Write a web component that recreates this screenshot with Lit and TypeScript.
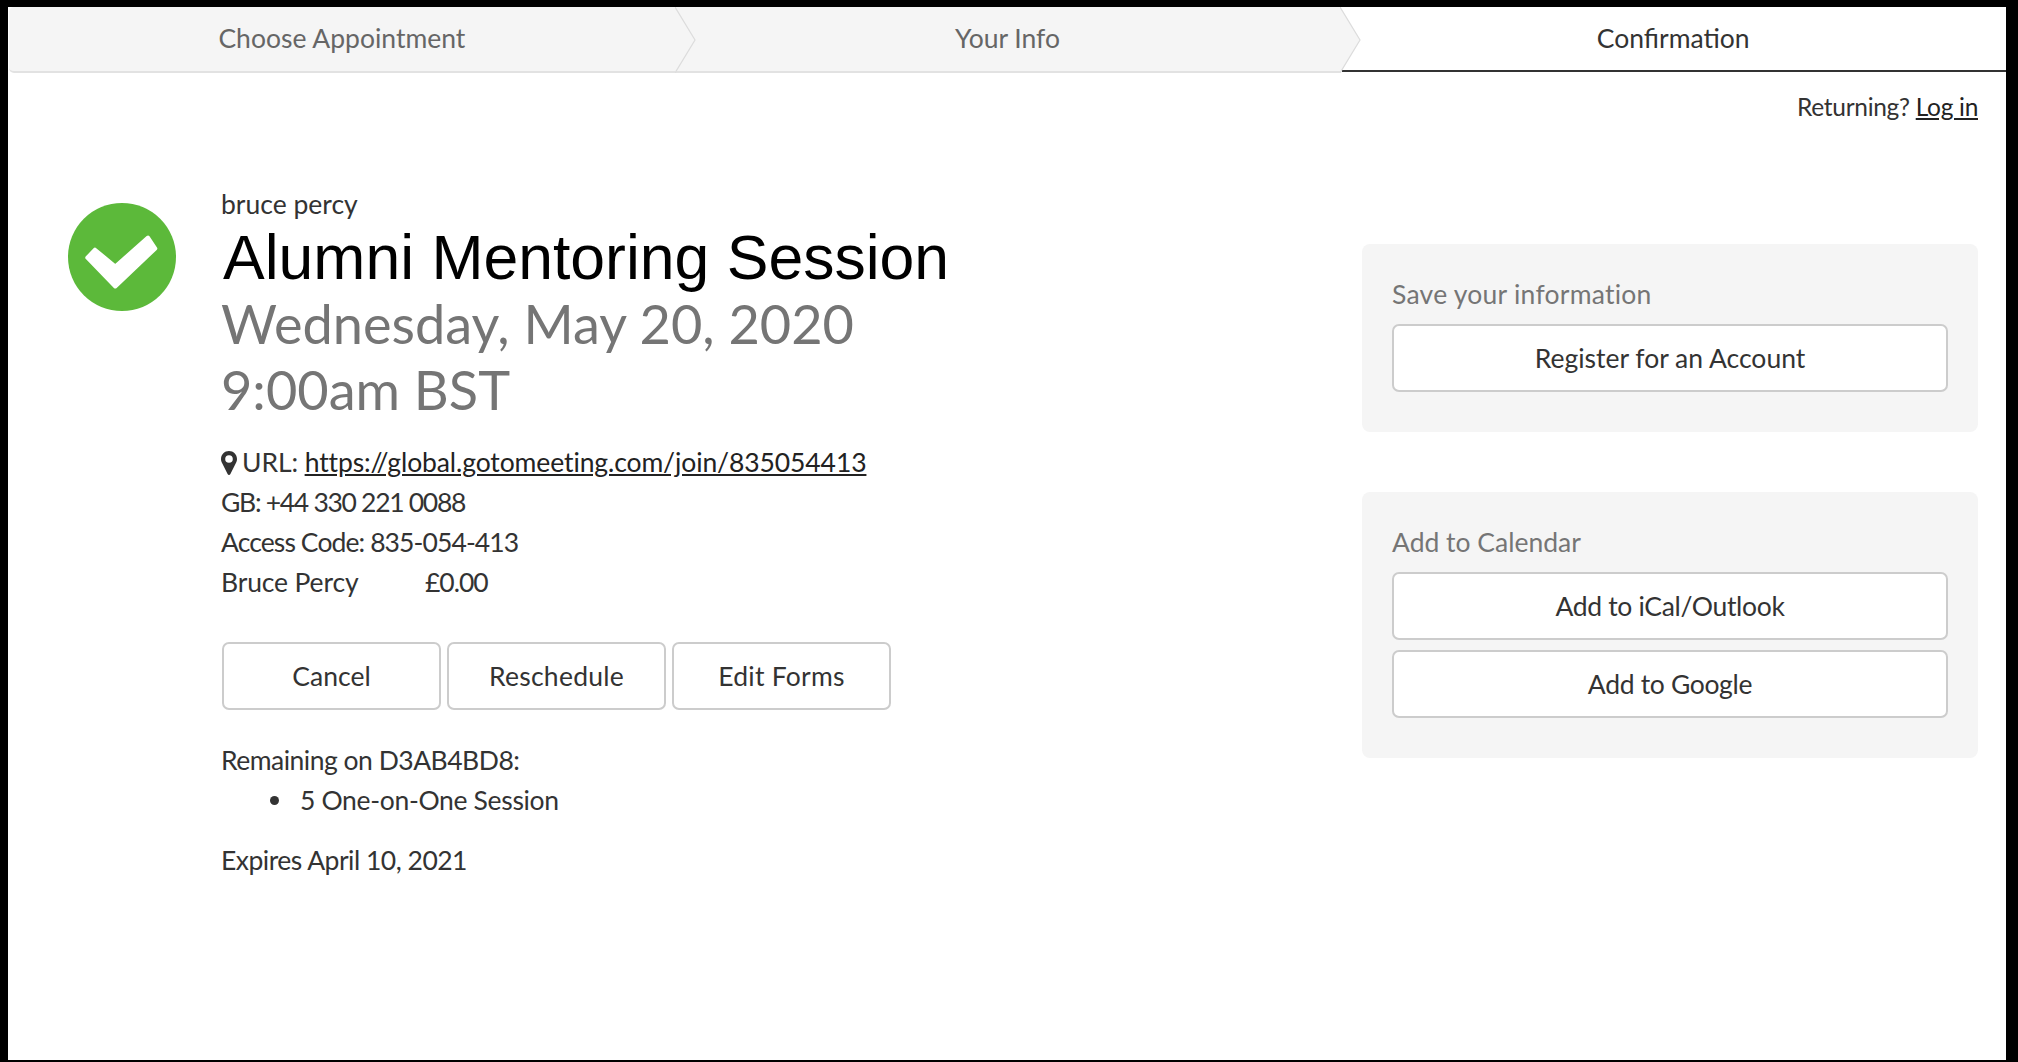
import { LitElement, html, css } from "lit";
import { customElement } from "lit/decorators.js";

@customElement("app-root")
export class AppRoot extends LitElement {
  static styles = css`
    :host { display: block; height: 1062px; box-sizing: border-box; background: #000; padding: 7px 12px 2px 8px; font-family: "Lato", "Noto Sans", sans-serif; font-size: 26.5px; line-height: 40px; color: #333; }
    * { box-sizing: border-box; }
    .page { background: #fff; height: 100%; overflow: hidden; }
    .tabs { display: flex; height: 66px; margin-left: 1px; }
    .tab { flex: 1; position: relative; display: flex; align-items: center; justify-content: center; padding-bottom: 2px; background: #f5f5f5; border-bottom: 2px solid #e2e2e2; color: #666; }
    .tab:first-child { border-top-left-radius: 5px; border-bottom-left-radius: 5px; }
    .tab.active { background: #fff; color: #333; border-bottom: 0; padding-bottom: 4px; }
    .tab.active::after { content: ""; position: absolute; left: 2px; right: 0; bottom: 1px; height: 2px; background: #333; }
    .chev { position: absolute; top: 0; left: 100%; width: 21px; height: 66px; z-index: 1; display: block; }
    .login { display: flex; justify-content: flex-end; gap: 6px; padding: 14px 28px 1px 0; font-size: 24.5px; letter-spacing: -0.3px; }
    a { color: #222; text-decoration: underline; }
    .body { display: flex; justify-content: space-between; padding: 0 28px 0 60px; }
    .main { display: flex; }
    .status { width: 108px; height: 108px; margin: 75px 45px 0 0; display: block; }
    .details { padding-top: 56px; width: 900px; }
    .title { font-family: "Liberation Sans", Arial, sans-serif; font-weight: 400; font-size: 62.5px; line-height: 66px; margin: 0 0 1px 2px; color: #000; }
    .when { font-size: 54.1px; line-height: 66px; margin: 0; color: #757575; font-weight: 400; }
    .info { margin-top: 19px; }
    .info div { height: 40px; }
    .pin { width: 16px; height: 24px; vertical-align: -3px; margin-right: 5px; }
    .name { display: inline-block; width: 204px; letter-spacing: -0.15px; }
    .url { letter-spacing: -0.1px; }
    .num-tight { letter-spacing: -1.3px; }
    .code-tight { letter-spacing: -0.9px; }
    .tight { letter-spacing: -0.5px; }
    .price { letter-spacing: -1px; }
    .snug { letter-spacing: -0.33px; }
    .loose { letter-spacing: 0.25px; }
    .actions { display: flex; margin-top: 40px; padding-left: 1px; gap: 6px; }
    .btn { display: flex; align-items: center; justify-content: center; height: 68px; background: #fff; border: 2px solid #ccc; border-radius: 7px; color: #333; }
    .actions .btn { width: 219px; }
    .rem { margin-top: 30px; }
    ul { margin: 0; padding: 0 0 0 49px; list-style: none; }
    li { display: flex; align-items: center; gap: 21px; }
    li::before { content: ""; width: 9px; height: 9px; border-radius: 50%; background: #333; }
    .exp { margin-top: 20px; }
    aside { width: 616px; padding-top: 116px; }
    .panel { background: #f5f5f5; border-radius: 8px; padding: 30px 30px 40px; margin-bottom: 60px; }
    .label { color: #757575; margin-bottom: 10px; }
    .panel .btn + .btn { margin-top: 10px; }
  `;

  chev() {
    return html`<svg class="chev" viewBox="0 0 21 66"><path d="M0 0 L20 33 L0 66" fill="#f5f5f5" stroke="#dcdcdc" stroke-width="1.2"/></svg>`;
  }

  render() {
    return html`
      <div class="page">
        <nav class="tabs">
          <div class="tab">Choose Appointment${this.chev()}</div>
          <div class="tab">Your Info${this.chev()}</div>
          <div class="tab active">Confirmation</div>
        </nav>
        <div class="login"><span>Returning?</span><a href="#">Log in</a></div>
        <div class="body">
          <div class="main">
            <svg class="status" viewBox="0 0 108 108">
              <circle cx="54" cy="54" r="54" fill="#5cb93a"/>
              <path d="M19.3 54.700 L27 46.700 L47.300 63.500 L80 34.500 L87.300 45.500 L47.300 83.500 Z" fill="#fff" stroke="#fff" stroke-width="4" stroke-linejoin="round"/>
            </svg>
            <div class="details">
              <div>bruce percy</div>
              <h1 class="title">Alumni Mentoring Session</h1>
              <h2 class="when">Wednesday, May 20, 2020</h2>
              <h2 class="when">9:00am BST</h2>
              <div class="info">
                <div class="url"><svg class="pin" viewBox="0 0 16 24"><path fill-rule="evenodd" fill="#333" d="M8 0C3.6 0 0 3.5 0 8c0 1.6.5 2.9 1.2 4.2L6.6 23c.6 1.3 2.2 1.3 2.8 0l5.4-10.800C15.500 10.900 16 9.600 16 8c0-4.500-3.600-8-8-8zm0 11.800A3.800 3.800 0 1 1 8 4.200a3.800 3.800 0 0 1 0 7.600z"/></svg>URL: <a href="#">https://global.gotomeeting.com/join/835054413</a></div>
                <div class="num-tight">GB: +44 330 221 0088</div>
                <div class="code-tight">Access Code: 835-054-413</div>
                <div><span class="name">Bruce Percy</span><span class="price">£0.00</span></div>
              </div>
              <div class="actions">
                <div class="btn">Cancel</div>
                <div class="btn loose">Reschedule</div>
                <div class="btn loose">Edit Forms</div>
              </div>
              <div class="rem tight">Remaining on D3AB4BD8:</div>
              <ul class="snug"><li>5 One-on-One Session</li></ul>
              <div class="exp tight">Expires April 10, 2021</div>
            </div>
          </div>
          <aside>
            <section class="panel">
              <div class="label loose">Save your information</div>
              <div class="btn">Register for an Account</div>
            </section>
            <section class="panel">
              <div class="label">Add to Calendar</div>
              <div class="btn snug">Add to iCal/Outlook</div>
              <div class="btn snug">Add to Google</div>
            </section>
          </aside>
        </div>
      </div>
    `;
  }
}
